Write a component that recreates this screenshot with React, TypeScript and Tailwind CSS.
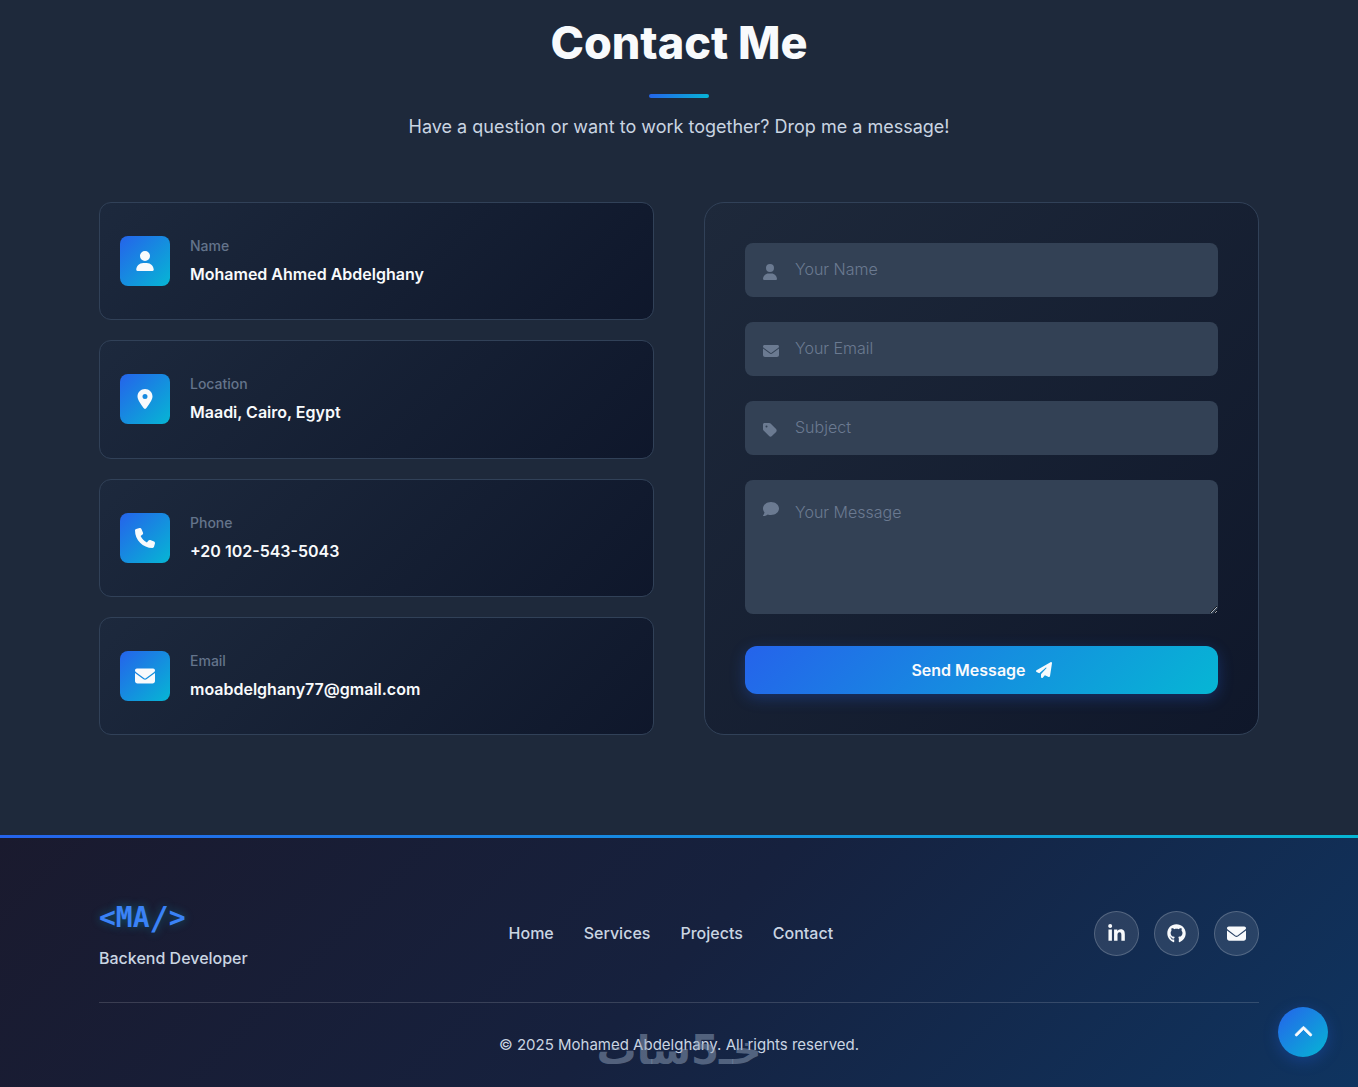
import React from "react";
import {
  FaUser,
  FaLocationDot,
  FaPhone,
  FaEnvelope,
  FaTag,
  FaComment,
  FaPaperPlane,
  FaLinkedinIn,
  FaGithub,
  FaChevronUp,
} from "react-icons/fa6";

const details = [
  { label: "Name", value: "Mohamed Ahmed Abdelghany", Icon: FaUser },
  { label: "Location", value: "Maadi, Cairo, Egypt", Icon: FaLocationDot },
  { label: "Phone", value: "+20 102-543-5043", Icon: FaPhone },
  { label: "Email", value: "moabdelghany77@gmail.com", Icon: FaEnvelope },
];

const fields = [
  { id: "name", type: "text", placeholder: "Your Name", Icon: FaUser, iconWidth: "w-3.5" },
  { id: "email", type: "email", placeholder: "Your Email", Icon: FaEnvelope, iconWidth: "w-4" },
  { id: "subject", type: "text", placeholder: "Subject", Icon: FaTag, iconWidth: "w-3.5" },
];

const socials = [
  { label: "LinkedIn", Icon: FaLinkedinIn },
  { label: "GitHub", Icon: FaGithub },
  { label: "Email", Icon: FaEnvelope },
];

const links = ["Home", "Services", "Projects", "Contact"];

function ContactDetails() {
  return (
    <div className="flex flex-col gap-5">
      {details.map(({ label, value, Icon }) => (
        <div
          key={label}
          className="flex min-h-28 flex-1 items-center gap-5 rounded-xl border border-slate-700 bg-linear-135/srgb from-slate-800 to-slate-900 px-5"
        >
          <div className="flex size-[50px] shrink-0 items-center justify-center rounded-lg bg-linear-135/srgb from-[#2563eb] to-[#06b6d4] text-slate-50">
            <Icon size={20} />
          </div>
          <div className="min-w-0 pb-0.5">
            <h3 className="mb-1 text-sm leading-6 font-medium text-[#64748b]">{label}</h3>
            <p className="text-base leading-6 font-semibold break-words text-slate-50">{value}</p>
          </div>
        </div>
      ))}
    </div>
  );
}

function ContactForm() {
  return (
    <form
      onSubmit={(e) => e.preventDefault()}
      className="flex flex-col rounded-[20px] border border-slate-700 bg-linear-135/srgb from-[#1e293b] to-[#0f172a] p-10"
    >
      <div className="flex flex-col gap-[25px]">
        {fields.map(({ id, type, placeholder, Icon, iconWidth }) => (
          <div key={id} className="relative">
            <label htmlFor={id} className="absolute top-[21px] left-[18px] text-[#6b7a91]">
              <Icon className={"h-4 " + iconWidth} aria-label={placeholder} />
            </label>
            <input
              id={id}
              type={type}
              placeholder={placeholder}
              className="block h-[54px] w-full rounded-lg bg-[#334155] pr-5 pb-0.5 pl-[50px] text-base font-light text-slate-50 outline-none placeholder:text-[#6b7a91]"
            />
          </div>
        ))}
        <div className="relative">
          <label htmlFor="message" className="absolute top-[21px] left-[18px] text-[#6b7a91]">
            <FaComment size={16} aria-label="Your Message" />
          </label>
          <textarea
            id="message"
            placeholder="Your Message"
            className="block h-[134px] w-full resize-y rounded-lg bg-[#334155] py-5 pr-5 pl-[50px] text-base font-light text-slate-50 outline-none placeholder:text-[#6b7a91]"
          />
        </div>
      </div>
      <button
        type="submit"
        className="mt-8 flex h-12 w-full items-center justify-center gap-2.5 rounded-xl bg-linear-135/srgb from-[#2563eb] to-[#06b6d4] text-base font-semibold text-slate-50 shadow-[0_4px_15px_rgba(37,99,235,0.3)]"
      >
        Send Message
        <FaPaperPlane size={16} />
      </button>
    </form>
  );
}

function Footer() {
  return (
    <footer className="bg-linear-135/srgb from-[#1a1a2e] via-[#16213e] to-[#0f3460]">
      <div className="h-[3px] bg-linear-90/srgb from-[#2563eb] to-[#06b6d4]" />
      <div className="mx-auto max-w-[1200px] px-5 pt-[57px]">
        <div className="flex flex-wrap items-center justify-between gap-y-6 border-b border-white/15 pb-[31px]">
          <div>
            <a
              href="#home"
              className="flex h-[46px] items-center font-['DejaVu_Sans_Mono',monospace] text-[28px] leading-[46px] font-bold text-[#3b82f6] [text-shadow:0_0_10px_rgba(6,182,212,0.4)]"
            >
              &lt;MA<span className="text-[32px]">/</span>&gt;
            </a>
            <p className="mt-1 text-base leading-[26px] font-medium text-slate-300">Backend Developer</p>
          </div>
          <nav className="flex flex-wrap gap-[30px]">
            {links.map((link) => (
              <a key={link} href={"#" + link.toLowerCase()} className="text-base font-medium text-slate-300">
                {link}
              </a>
            ))}
          </nav>
          <div className="flex gap-[15px]">
            {socials.map(({ label, Icon }) => (
              <a
                key={label}
                href={"#" + label.toLowerCase()}
                aria-label={label}
                className="flex size-[45px] items-center justify-center rounded-full border border-white/20 bg-white/10 text-slate-50"
              >
                <Icon size={19} />
              </a>
            ))}
          </div>
        </div>
        <div className="relative py-[30px] text-center">
          <p className="text-[15px] leading-6 text-slate-300">© 2025 Mohamed Abdelghany. All rights reserved.</p>
          <span
            dir="rtl"
            lang="ar"
            className="pointer-events-none absolute inset-x-0 top-5 text-center font-['DejaVu_Sans',sans-serif] text-[40px] leading-[54px] font-bold text-slate-400/50"
          >
            خـ5سات
          </span>
        </div>
      </div>
    </footer>
  );
}

export default function App() {
  return (
    <div className="min-h-screen bg-[#1e293b] font-['Inter',sans-serif]">
      <section id="contact" className="mx-auto max-w-[1200px] px-5 pt-4 pb-[100px]">
        <header className="flex flex-col items-center text-center">
          <h2 className="text-[45px] leading-[54px] font-extrabold text-slate-50">Contact Me</h2>
          <div className="mt-6 h-1 w-[60px] rounded-sm bg-linear-135/srgb from-[#2563eb] to-[#06b6d4]" />
          <p className="mt-[15px] text-lg leading-7 text-slate-300">
            Have a question or want to work together? Drop me a message!
          </p>
        </header>
        <div className="mt-[61px] grid gap-[50px] md:grid-cols-2">
          <ContactDetails />
          <ContactForm />
        </div>
      </section>
      <Footer />
      <button
        type="button"
        aria-label="Back to top"
        className="fixed right-[30px] bottom-[30px] flex size-[50px] items-center justify-center rounded-full bg-linear-135/srgb from-[#2563eb] to-[#06b6d4] text-slate-50 shadow-[0_4px_15px_rgba(37,99,235,0.3)]"
      >
        <FaChevronUp size={19} stroke="currentColor" strokeWidth={20} />
      </button>
    </div>
  );
}
